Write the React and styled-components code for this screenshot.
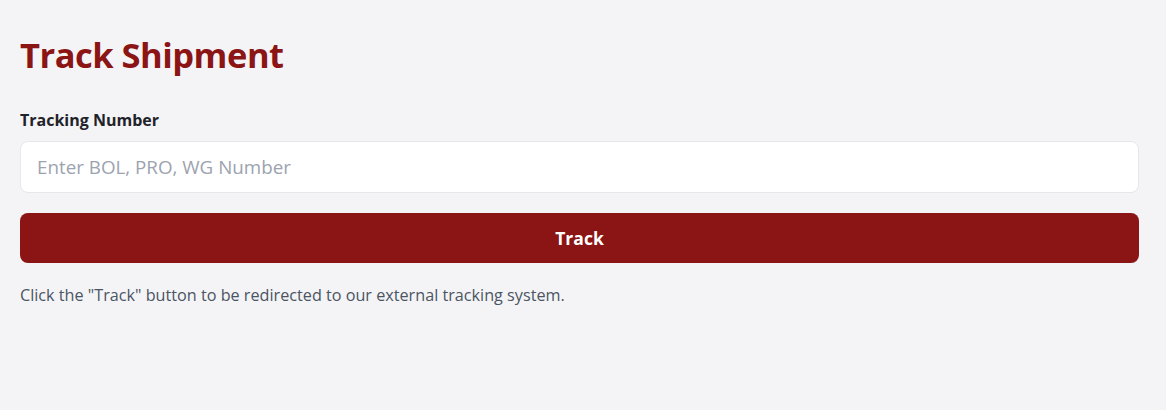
import styled, { createGlobalStyle } from 'styled-components';
import { useState } from 'react';

const GlobalStyle = createGlobalStyle`
  body {
    margin: 0;
    background: #f4f4f6;
    font-family: "Open Sans", "Noto Sans", sans-serif;
  }
`;

const TrackShipment = () => {
  const [number, setNumber] = useState('');

  return (
    <Page>
      <Title>Track Shipment</Title>
      <Label htmlFor="tracking">Tracking Number</Label>
      <Input
        id="tracking"
        value={number}
        onChange={e => setNumber(e.target.value)}
        placeholder="Enter BOL, PRO, WG Number"
      />
      <TrackButton>Track</TrackButton>
      <Note>Click the "Track" button to be redirected to our external tracking system.</Note>
    </Page>
  )
}

export default function App() {
  return (
    <>
      <GlobalStyle />
      <TrackShipment />
    </>
  )
}

const Page = styled.div`
  box-sizing: border-box;
  width: 1159px;
  height: 410px;
  padding: 27px 20px 20px 20px;
  display: flex;
  flex-direction: column;
`;

const Title = styled.h1`
  margin: 0 0 26px 0;
  font-size: 34.5px;
  line-height: 56px;
  font-weight: 700;
  color: #8b1414;
  letter-spacing: -0.5px;
`;

const Label = styled.label`
  font-size: 16px;
  line-height: 22px;
  font-weight: 700;
  color: #1f2329;
  margin-bottom: 10px;
`;

const Input = styled.input`
  box-sizing: border-box;
  height: 52px;
  width: 100%;
  padding: 0 16px;
  border: 1px solid #e5e7eb;
  border-radius: 8px;
  background: #fff;
  font-family: inherit;
  font-size: 18.8px;
  color: #1f2329;
  outline: none;

  &::placeholder {
    color: #9ca3af;
  }
`;

const TrackButton = styled.button`
  margin-top: 20px;
  height: 50px;
  width: 100%;
  border: none;
  border-radius: 8px;
  background: #8b1414;
  color: #fff;
  font-family: inherit;
  font-size: 17.5px;
  font-weight: 700;
  cursor: pointer;
`;

const Note = styled.p`
  margin: 21px 0 0 0;
  font-size: 16.2px;
  line-height: 22px;
  color: #4b5563;
`;
